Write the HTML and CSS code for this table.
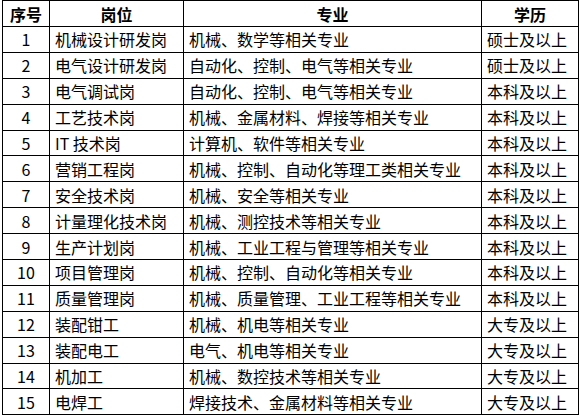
FILE: index.html
```html
<!DOCTYPE html>
<html lang="zh-CN">
<head>
<meta charset="utf-8">
<title>岗位表</title>
<link rel="stylesheet" href="styles.css">
</head>
<body>
<table class="jobs">
  <colgroup>
    <col class="c-no">
    <col class="c-post">
    <col class="c-major">
    <col class="c-edu">
  </colgroup>
  <thead>
    <tr><th>序号</th><th>岗位</th><th>专业</th><th>学历</th></tr>
  </thead>
  <tbody>
    <tr><td class="num">1</td><td>机械设计研发岗</td><td>机械、数学等相关专业</td><td>硕士及以上</td></tr>
    <tr><td class="num">2</td><td>电气设计研发岗</td><td>自动化、控制、电气等相关专业</td><td>硕士及以上</td></tr>
    <tr><td class="num">3</td><td>电气调试岗</td><td>自动化、控制、电气等相关专业</td><td>本科及以上</td></tr>
    <tr><td class="num">4</td><td>工艺技术岗</td><td>机械、金属材料、焊接等相关专业</td><td>本科及以上</td></tr>
    <tr><td class="num">5</td><td>IT 技术岗</td><td>计算机、软件等相关专业</td><td>本科及以上</td></tr>
    <tr><td class="num">6</td><td>营销工程岗</td><td>机械、控制、自动化等理工类相关专业</td><td>本科及以上</td></tr>
    <tr><td class="num">7</td><td>安全技术岗</td><td>机械、安全等相关专业</td><td>本科及以上</td></tr>
    <tr><td class="num">8</td><td>计量理化技术岗</td><td>机械、测控技术等相关专业</td><td>本科及以上</td></tr>
    <tr><td class="num">9</td><td>生产计划岗</td><td>机械、工业工程与管理等相关专业</td><td>本科及以上</td></tr>
    <tr><td class="num">10</td><td>项目管理岗</td><td>机械、控制、自动化等相关专业</td><td>本科及以上</td></tr>
    <tr><td class="num">11</td><td>质量管理岗</td><td>机械、质量管理、工业工程等相关专业</td><td>本科及以上</td></tr>
    <tr><td class="num">12</td><td>装配钳工</td><td>机械、机电等相关专业</td><td>大专及以上</td></tr>
    <tr><td class="num">13</td><td>装配电工</td><td>电气、机电等相关专业</td><td>大专及以上</td></tr>
    <tr><td class="num">14</td><td>机加工</td><td>机械、数控技术等相关专业</td><td>大专及以上</td></tr>
    <tr><td class="num">15</td><td>电焊工</td><td>焊接技术、金属材料等相关专业</td><td>大专及以上</td></tr>
  </tbody>
</table>
</body>
</html>
```

FILE: styles.css
```css
html, body {
  margin: 0;
  padding: 0;
  background: #fff;
}

body {
  font-family: "Noto Sans CJK SC", "Noto Sans", sans-serif;
  color: #000;
}

.jobs {
  margin: 0 0 0 2px;
  border-collapse: collapse;
  table-layout: fixed;
  width: 576px;
  font-size: 16px;
  line-height: 18px;
}

.c-no { width: 47px; }
.c-post { width: 134px; }
.c-major { width: 298px; }
.c-edu { width: 97px; }

.jobs th,
.jobs td {
  border: 1px solid #000;
  padding: 0 0 0 5px;
  white-space: nowrap;
  overflow: hidden;
  text-align: left;
  font-weight: normal;
}

.jobs thead tr {
  height: 26px;
}

.jobs tbody tr {
  height: 25.9px;
}

.jobs th {
  text-align: center;
  font-weight: bold;
  padding: 0;
}

.jobs td.num {
  text-align: center;
  padding: 0;
}
```
